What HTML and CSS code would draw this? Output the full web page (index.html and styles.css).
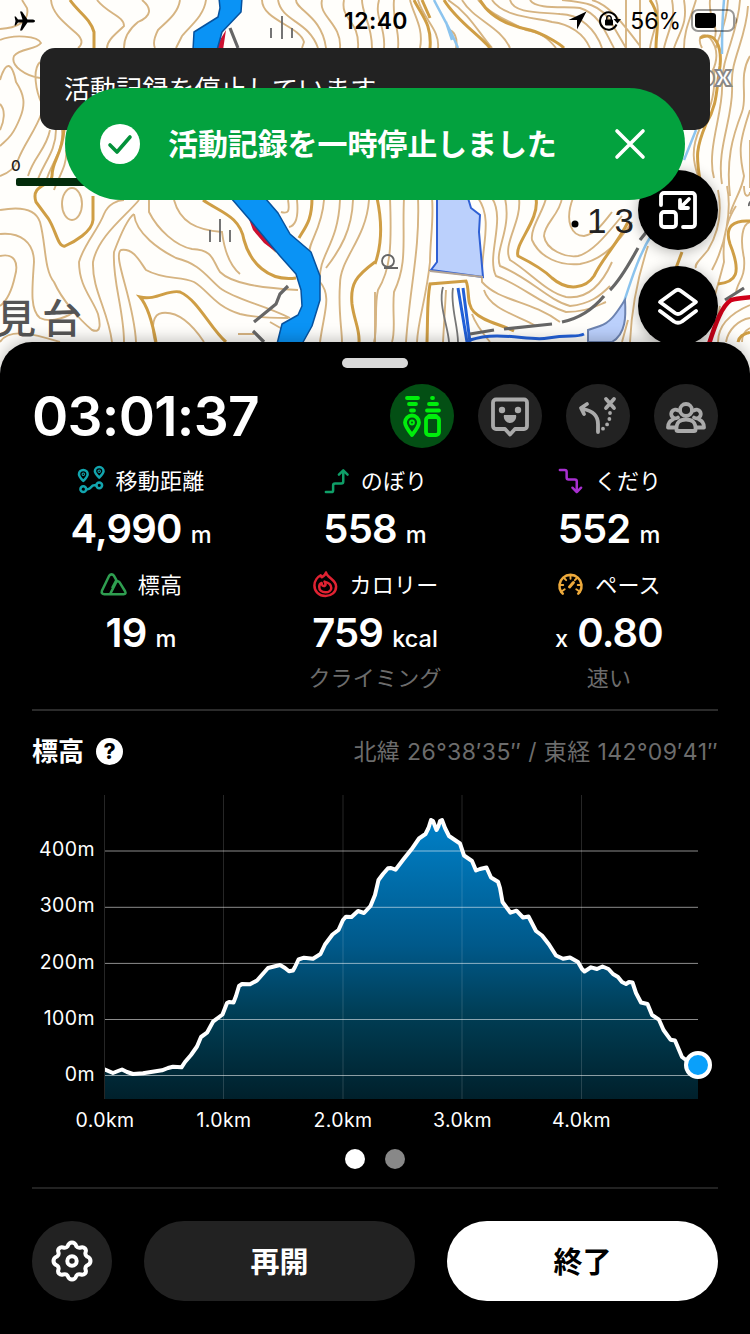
FILE: index.html
```
<!DOCTYPE html>
<html lang="ja">
<head>
<meta charset="UTF-8" />
<title>活動記録</title>
<link rel="stylesheet" href="styles.css">
</head>
<body>

<div class="map">
  <svg class="map-canvas" viewBox="0 0 750 374">
    <!-- contour lines -->
    <g class="contour">
      <path d="M0 29C16 28 30 22 27 8L22 0M51 0C52 14 66 24 76 33C84 40 82 45 78 48M97 0C108 14 124 16 124 26C116 34 107 40 107 48M142 0C152 8 152 16 138 22C128 30 124 40 124 48M180 0C178 14 166 22 158 30C154 38 153 44 155 48M206 0C204 16 190 26 182 36L176 48"/>
      <path d="M0 40C14 34 38 36 41 43C36 50 20 48 14 56C10 66 26 76 40 78M0 80C6 60 12 62 16 82C24 94 26 104 20 118C12 138 6 140 0 146M0 104C6 110 4 122 0 130M40 62C32 70 36 92 42 104M42 112C36 130 24 144 18 160C14 170 6 174 0 176M50 130C46 150 34 156 28 176M56 130C56 154 40 166 36 186M62 130C64 152 50 164 46 182M66 150C68 164 58 178 54 190"/>
      <ellipse cx="72" cy="204" rx="10" ry="16"/>
      <path d="M0 210C22 206 36 210 40 222C46 244 44 270 54 282C62 300 80 320 92 330C102 334 100 322 98 314C92 298 79 286 79 262C84 244 98 230 104 214C108 204 118 200 124 200"/>
      <path d="M0 234C20 232 34 242 34 262C32 290 30 310 40 318C52 324 70 316 76 310M0 256C14 253 19 262 15 276C12 290 8 300 0 306M139 200C126 216 98 236 93 262C92 290 108 310 112 342M134 214C128 218 120 236 114 252C112 280 124 310 124 342M0 342C10 326 40 336 60 342"/>
      <path d="M136 342C134 300 112 256 121 250C134 248 140 262 146 270C164 280 180 276 194 282C208 290 214 306 240 314C256 318 272 318 288 318M134 214C136 234 160 250 176 258C200 264 206 276 220 288C236 300 262 304 290 318M149 200V212C158 230 176 246 192 249C214 250 212 260 220 272C232 284 262 288 298 290M174 200C180 222 196 230 222 232C224 248 228 264 240 274M155 342C151 326 153 314 162 313C178 311 192 324 204 342M238 334L254 334M270 322L284 330M256 232L276 252"/>
      <path d="M288 200C290 212 288 214 281 212M297 200C299 220 294 226 289 227M324 200C322 230 306 246 310 254M340 200C338 246 318 254 320 282C332 296 324 312 320 342M353 200C352 230 340 250 326 268M369 200C366 240 340 258 340 284C338 310 342 330 342 342M375 292V342"/>
      <path d="M390 198C392 250 390 270 378 290C374 306 378 328 374 342M404 198C402 240 408 262 394 292C392 312 396 330 392 342M418 198C420 250 410 286 406 342M432 198C434 220 430 240 430 262C426 300 418 320 417 342M443 342L446 290M490 342C480 330 474 320 472 314"/>
      <path d="M573 198C564 222 572 236 584 236C596 234 604 222 612 212M562 198C560 214 544 224 544 236C546 250 566 258 578 256C594 252 610 230 622 216M546 198C544 210 530 228 532 240C540 258 560 266 580 264C604 260 620 240 632 222M519 198C522 222 502 244 510 260C530 272 546 292 566 297C590 300 604 280 612 262M505 198C512 230 494 250 500 266C530 278 548 300 570 306C590 304 600 296 610 286M492 198C506 220 486 256 496 276C520 284 540 304 566 312C590 312 600 304 606 302M478 198C494 220 480 250 482 282C500 302 530 300 560 322M484 290C490 310 520 316 536 326M648 246C640 270 632 300 630 342M664 342C662 330 650 328 652 316M628 320L622 342"/>
    </g>
    <g class="contour">
      <path d="M262 0C262 20 300 26 304 42L302 48M278 0C282 22 308 20 318 48M296 0C296 10 322 16 326 48M322 0C318 16 342 24 340 48M344 0C340 20 360 20 358 48M362 0C362 14 372 24 372 48M379 0C374 18 386 26 384 48M394 0C392 20 400 30 398 48M410 0C414 16 424 28 420 48M418 0C424 20 440 30 438 48M448 0C470 14 478 32 492 48M462 0C474 20 500 26 510 48M478 0C490 14 506 20 526 30C540 32 548 38 556 48M492 0C504 18 540 18 552 22C570 24 584 34 590 48M510 0C514 14 540 12 560 14C580 14 596 30 602 48M530 0C536 10 566 6 580 8C600 14 606 34 614 48M562 0C584 2 602 4 612 24L626 48M592 0C606 4 616 14 640 46M626 0V48M640 0V48M656 0C662 16 652 32 650 48M672 0C676 20 668 30 664 48M684 0C688 24 680 30 674 48M696 0C690 20 684 30 684 48M448 30C454 30 458 38 456 48"/>
      <path d="M702 48C696 36 704 32 710 38C718 48 718 60 712 72M740 0C738 34 722 56 722 84C724 110 706 150 714 178M748 6C746 40 730 60 732 86C734 116 716 148 722 184M750 56C738 76 748 96 742 112C732 138 726 160 730 196M750 110C740 140 738 150 744 176C742 190 734 200 730 214M750 140V188M728 0C726 30 718 36 716 48M714 70C716 92 710 112 700 128C690 150 694 164 698 176M710 0C708 20 720 26 714 40"/>
      <path d="M718 190C722 210 720 230 708 250C700 260 694 264 696 268M727 186C732 210 726 244 712 270M736 206C728 218 722 236 724 262C720 278 716 290 714 300M750 222C742 224 740 240 744 258C746 280 736 282 736 294M750 318C738 320 728 330 726 342M750 305C724 316 718 330 718 342M742 342C742 334 746 330 750 328M744 186C744 200 750 196 750 192M720 306L718 316"/>
    </g>
    <g class="contour bold">
      <path d="M70 0C78 12 90 18 94 32V48M64 130C62 156 52 160 52 176C52 186 30 184 36 202L48 218C56 230 58 248 65 246C74 242 92 232 93 220V196M203 200C220 212 240 216 244 240C250 262 268 282 296 278M156 342C152 320 146 304 140 297C156 301 168 289 180 292C198 300 210 328 226 342M312 198C312 220 306 226 299 238M375 262C356 276 350 284 352 304C354 320 360 330 359 342M377 198C384 230 380 250 375 264"/>
      <path d="M427 342C428 310 427 300 430 284L466 281C470 290 466 304 474 312C484 322 500 324 514 331M536 198C540 220 514 244 518 256C534 264 544 270 552 278C568 292 586 288 594 276C604 256 616 246 628 222"/>
      <path d="M414 0C422 16 432 24 430 48M444 0C456 20 478 34 490 48M480 0C490 18 510 26 530 30C544 34 560 44 564 48M422 0L430 18M650 0C662 18 656 28 656 48M700 38C716 30 722 48 720 66C716 90 718 104 706 124C696 148 696 156 700 180M750 221C734 220 724 226 730 244C742 274 736 282 718 284M676 268L682 252M738 342C740 334 746 334 750 332"/>
    </g>

    <!-- streams and ponds -->
    <path class="stream" d="M434 0C442 16 450 28 458 48M446 22L452 40M724 0C722 20 722 30 722 54M696 130L684 160M652 234C638 256 630 284 622 308"/>
    <path class="pond" d="M437 198H468L471 208L480 215L479 232L483 277L431 270L437 262Z"/>
    <path class="pond soft" d="M625 300C618 310 612 322 600 326L588 330V342H612C626 334 626 316 625 300Z"/>
    <path class="levee" d="M430 271L483 277"/>
    <path class="canal" d="M458 288L467 342M463 288L470 342M470 340C500 330 530 342 548 338C570 334 576 338 584 334"/>
    <path class="lane" d="M443 287C438 304 448 326 449 342M453 288C450 304 458 326 458 342"/>
    <path class="road" d="M288 286L280 294L276 304L254 322M253 331L264 342M470 334L494 330M504 329L552 324M562 322C582 318 594 308 604 296M610 290C622 278 630 262 638 248M640 240L648 230M725 300L744 288M230 28L238 48"/>

    <!-- track walked so far -->
    <path class="track" d="M214 50L226 30L223 50ZM247 214L253 230L264 243L276 252L262 226Z"/>
    <path class="track-line" d="M709 344C716 322 722 306 731 300C738 298 744 298 752 297"/>
    <path class="route" d="M219 -2H242L241 12L222 32L217 50H193L194 32L218 17L220 8Z"/>
    <path class="route" d="M231 198H265L278 213L290 234L311 252L320 276V300L312 326L302 344H277L282 324L298 315L302 306L301 290L296 274L280 256L250 220Z"/>

    <!-- vegetation marks -->
    <path class="mark" d="M271 28V38M282 16V39M292 28V38M210 230V242M220 219V242M230 230V242"/>
    <path class="mark" d="M382 261a6 6 0 1 1 12 0a6 6 0 1 1-12 0M384 268H398M749 206a5 5 0 1 1 4 4"/>

    <text class="place" x="-4" y="333">見台</text>
    <circle cx="575" cy="224" r="3.5"/>
    <text class="peak" x="587" y="233">13</text>
    <text class="logo" x="697" y="86">ox</text>

    <text class="scale-text" x="11" y="171">0</text>
    <rect class="scale-bar" x="16" y="178" width="120" height="8" rx="2"/>
  </svg>

  <header class="status">
    <svg class="plane" viewBox="0 0 22 20"><path d="M21 10C21 9 19.500 8.500 18 8.500H13.500L8 0.500H6L8.500 8.500H4L1.800 5.500H0.500L1.500 10L0.500 14.500H1.800L4 11.500H8.500L6 19.500H8L13.500 11.500H18C19.500 11.500 21 11 21 10Z"/></svg>
    <span class="clock">12:40</span>
    <div class="status-right">
      <svg width="19" height="19" viewBox="0 0 19 19"><path d="M18.500 0.500L0.500 9H9V18.500Z"/></svg>
      <svg width="22" height="20" viewBox="0 0 22 20">
        <path class="ring" d="M17.500 13.500A8.600 8.600 0 1 1 18 8"/>
        <path d="M14.500 8H22L18.500 12.500Z"/>
        <rect x="6" y="8.500" width="8" height="6" rx="1"/>
        <path class="ring thin" d="M7.800 9V7a2.200 2.200 0 0 1 4.400 0V9"/>
      </svg>
      <span class="percent">56%</span>
      <svg width="47" height="23" viewBox="0 0 47 23">
        <rect class="cell" x="1" y="1" width="42" height="21" rx="6"/>
        <rect x="4" y="4" width="21" height="15" rx="3"/>
        <path class="cap" d="M44.500 8C46.500 9 46.500 14 44.500 15Z"/>
      </svg>
    </div>
  </header>

  <div class="banner">活動記録を停止しています</div>

  <button class="map-btn shrink">
    <svg width="40" height="40" viewBox="0 0 40 40">
      <path d="M3 15V6a3 3 0 0 1 3-3H34a3 3 0 0 1 3 3V34a3 3 0 0 1-3 3H25"/>
      <rect x="3" y="22" width="15" height="15" rx="3"/>
      <path d="M31 9L22 18M22 10V18H30"/>
    </svg>
  </button>
  <button class="map-btn layers">
    <svg width="42" height="40" viewBox="0 0 42 40">
      <path d="M24 5L39 16L24 27Q21 29 18 27L3 16L18 5Q21 2.500 24 5Z"/>
      <path d="M3 25L17 35.500Q21 38 25 35.500L39 25"/>
    </svg>
  </button>

  <div class="toast">
    <svg width="40" height="40" viewBox="0 0 40 40">
      <circle cx="20" cy="20" r="20"/>
      <path d="M10 21L17 28L30 13"/>
    </svg>
    <span>活動記録を一時停止しました</span>
    <svg class="close" width="32" height="32" viewBox="0 0 32 32"><path d="M3 3L29 29M29 3L3 29"/></svg>
  </div>
</div>

<main class="panel">
  <div class="handle"></div>

  <div class="head">
    <div class="timer">03:01:37</div>
    <div class="modes">
      <button class="mode on">
        <svg viewBox="0 0 64 64">
          <path d="M17 14H28M19 20H26M21 26.500H24M42 14H43M39 20H47M37 26.500H49"/>
          <path d="M22 51C18 46 15 42 15 38.500a7 7 0 0 1 14 0C29 42 26 46 22 51Z"/>
          <circle cx="22" cy="38.500" r="1"/>
          <rect x="36" y="33" width="13" height="18" rx="3"/>
          <path d="M39 32H46"/>
        </svg>
      </button>
      <button class="mode">
        <svg viewBox="0 0 64 64">
          <path d="M18 15.500H46a3 3 0 0 1 3 3V42a3 3 0 0 1-3 3H37L32 50.500L27 45H18a3 3 0 0 1-3-3V18.500a3 3 0 0 1 3-3Z"/>
          <circle class="solid" cx="24" cy="26" r="3.200"/>
          <circle class="solid" cx="40" cy="26" r="3.200"/>
          <path class="solid" d="M26 31H38C39 35 36 39 32 39C28 39 25 35 26 31Z"/>
        </svg>
      </button>
      <button class="mode">
        <svg viewBox="0 0 64 64">
          <path d="M32 48V40C32 33 28 27 17 25M21 20L15 24L18 30M40 15L48 24M48 15L40 24"/>
          <path class="dotted" d="M44 29C44 36 42 42 35 46"/>
        </svg>
      </button>
      <button class="mode">
        <svg viewBox="0 0 64 64">
          <circle cx="32" cy="26" r="6"/>
          <path d="M22.500 46C22 38 26 35.500 32 35.500C38 35.500 42 38 41.500 46Q41.500 47 40 47H24Q22.500 47 22.500 46Z"/>
          <path d="M24 33.500A4.300 4.300 0 1 1 24 26.500M40 33.500A4.300 4.300 0 1 0 40 26.500"/>
          <path d="M19 35.500C15 37 14 40 14 43.500H21M45 35.500C49 37 50 40 50 43.500H43"/>
        </svg>
      </button>
    </div>
  </div>

  <div class="stats">
    <section class="stat">
      <h2 class="label">
        <svg class="teal" viewBox="0 0 28 28"><path d="M5.500 14.500C2 11 1 9.500 1 7.500a4.500 4.500 0 0 1 9 0C10 9.500 9 11 5.500 14.500ZM22 11C18.500 7.500 17.500 6 17.500 4.500a4.500 4.500 0 0 1 9 0C26.500 6 25.500 7.500 22 11Z"/><circle cx="5.500" cy="23" r="3"/><circle cx="22" cy="19" r="3"/><path d="M8.500 23H10C14 23 13 19 17 19H19"/><circle cx="5.500" cy="7.500" r=".5"/><circle cx="22" cy="4.500" r=".5"/></svg>
        <span>移動距離</span>
      </h2>
      <p class="value"><b>4,990</b><small>m</small></p>
    </section>
    <section class="stat">
      <h2 class="label">
        <svg class="green" viewBox="0 0 28 28"><path d="M3 26H8.500a2 2 0 0 0 2-2V19a2 2 0 0 1 2-2H19a2 2 0 0 0 2-2V4M16.500 8L21 3.500L25.500 8"/></svg>
        <span>のぼり</span>
      </h2>
      <p class="value"><b>558</b><small>m</small></p>
    </section>
    <section class="stat">
      <h2 class="label">
        <svg class="purple" viewBox="0 0 28 28"><path d="M3 3H8a2 2 0 0 1 2 2V11a2 2 0 0 0 2 2H18.500a2 2 0 0 1 2 2V26M16 21.500L20.500 26L25 21.500"/></svg>
        <span>くだり</span>
      </h2>
      <p class="value"><b>552</b><small>m</small></p>
    </section>
    <section class="stat">
      <h2 class="label">
        <svg class="leaf" viewBox="0 0 28 28"><path d="M9.500 5C11 3 13 3 14.500 5L17 9.500L13 17M4.500 24H24.500Q27.500 24 26 21L20.500 12Q18.500 9.500 16.500 12L10.500 24M9.500 5L2 20.500Q1 24 4.500 24"/></svg>
        <span>標高</span>
      </h2>
      <p class="value"><b>19</b><small>m</small></p>
    </section>
    <section class="stat">
      <h2 class="label">
        <svg class="red" viewBox="0 0 28 28"><path d="M14 26C7 26 2.500 21 2.500 15C2.500 10 6 6 9 4.500L10 6.500C12 5.500 14 3.500 14.500 1.500C15.500 7 25 9 25 16C25 22 20 26 14 26Z"/><path d="M14 22C10 22 7.500 20 7.500 16.500C7.500 14.500 8.500 13 10 12.500C10 15 11.500 16 13 15.500C14.500 14.500 14 12.500 13 11C17 12 20 14 20 17.500C20 20 17.500 22 14 22Z"/></svg>
        <span>カロリー</span>
      </h2>
      <p class="value"><b>759</b><small>kcal</small></p>
      <p class="note">クライミング</p>
    </section>
    <section class="stat">
      <h2 class="label">
        <svg class="orange" viewBox="0 0 28 28"><path d="M6 23.500L4.500 22A11.500 11.500 0 1 1 23.500 22L22 23.500"/><path class="tick" d="M14 4V8M20.500 7.500L18.500 9.500M7.500 7.500L9.500 9.500M3 14.500H6.500M21.500 14.500H25M5 21L8 19M23 21L20 19"/><path class="needle" d="M13 16.500L17 12"/></svg>
        <span>ペース</span>
      </h2>
      <p class="value"><small>x</small><b>0.80</b></p>
      <p class="note">速い</p>
    </section>
  </div>

  <div class="chart-head">
    <h3>標高</h3>
    <span class="help">?</span>
    <span class="coords">北緯 26°38′35″ / 東経 142°09′41″</span>
  </div>

  <svg class="chart" viewBox="32 780 686 360">
    <defs>
      <linearGradient id="fade" gradientUnits="userSpaceOnUse" x1="0" y1="820" x2="0" y2="1099">
        <stop offset="0" stop-color="#0080c8"/>
        <stop offset=".45" stop-color="#00598a"/>
        <stop offset=".7" stop-color="#003d54"/>
        <stop offset="1" stop-color="#00202b"/>
      </linearGradient>
      <clipPath id="plot"><rect x="105" y="795" width="593" height="304"/></clipPath>
      <path id="profile" d="M90 1110V1069.500H105L113 1073L118 1071L122 1069.500L127 1072L133 1074L143 1073.300L162 1070.300L168 1068L173 1066.700L181.500 1067.300L185 1062L191 1055L197 1046.500L201 1037L207 1032.700L213 1021.700L222.500 1014.500L227 1003L229 1002L233.500 1002.500L236 996L239 986L242 984L250 984.300L257 980.500L268 968L280 965L285 968L289 971.300L293 970.500L295 967L298.500 959.500L304 957.700L313 958.700L320.500 954L325 944.500L332.500 934.500L338.500 930L343 920L346 916.700L351.500 917L358 911L364 913L370.500 906L375 895L378.500 880L383 874L388 868.300L391 868L395.500 869.700L403.500 859.300L411.500 849.300L419 838.500L425.500 834L428.500 828L431 820L433 821L436.500 830L438.500 826L440 821L442 820L445 828L449 836L460 843.500L464 855.500L472 861L476 870.500L480 869L486.500 867.500L491 877.500L498 881.700L500 888L502.500 902L510.500 912.700L516.500 910.700L523 917.500L528.500 916.500L536 931L542 935.500L549 944.500L556 955.500L563 958.700L570 957.500L578 962L582 969L584.500 971.500L591 967.300L597 969L602.500 966.500L608.500 969L613 974L618 977L622 982L626 984L629 982L632.500 982.500L636 993L641 1002.500L647.500 1004L652 1015L659 1019.700L663.500 1030L670.500 1039.700L675 1040.500L682 1057L690 1063L698 1065H710V1110Z"/>
    </defs>
    <use href="#profile" fill="url(#fade)" clip-path="url(#plot)"/>
    <path class="grid-v" d="M104.500 795V1099M223.500 795V1099M343 795V1099M462 795V1099M581.500 795V1099"/>
    <path class="grid-h" d="M105 851H698M105 907.300H698M105 963.400H698M105 1019.500H698M105 1075.500H698"/>
    <use class="line" href="#profile" clip-path="url(#plot)"/>
    <circle class="now" cx="698" cy="1065" r="12"/>
    <g class="axis axis-y">
      <text x="95" y="856">400m</text>
      <text x="95" y="912">300m</text>
      <text x="95" y="969">200m</text>
      <text x="95" y="1025">100m</text>
      <text x="95" y="1081">0m</text>
    </g>
    <g class="axis">
      <text x="105" y="1127">0.0km</text>
      <text x="224" y="1127">1.0km</text>
      <text x="343" y="1127">2.0km</text>
      <text x="462.500" y="1127">3.0km</text>
      <text x="581.500" y="1127">4.0km</text>
    </g>
  </svg>

  <div class="pager"><i class="active"></i><i></i></div>

  <footer class="actions">
    <button class="gear">
      <svg width="44" height="44" viewBox="0 0 44 44">
        <path d="M22 3.500C25 3.500 25.500 5 26.500 7.500C27.500 9 29 9 31 8.500C33 8 34 8.500 35 9.500C36 10.500 36.300 11.500 35.500 13.500C35 15.500 35.500 16.500 37 17.500C39.500 18.500 40.500 19.500 40.500 22C40.500 24.500 39.500 25.500 37 26.500C35.500 27.500 35 28.500 35.500 30.500C36.300 32.500 36 33.500 35 34.500C34 35.500 33 36 31 35.500C29 35 27.500 35 26.500 36.500C25.500 39 25 40.500 22 40.500C19 40.500 18.500 39 17.500 36.500C16.500 35 15 35 13 35.500C11 36 10 35.500 9 34.500C8 33.500 7.700 32.500 8.500 30.500C9 28.500 8.500 27.500 7 26.500C4.500 25.500 3.500 24.500 3.500 22C3.500 19.500 4.500 18.500 7 17.500C8.500 16.500 9 15.500 8.500 13.500C7.700 11.500 8 10.500 9 9.500C10 8.500 11 8 13 8.500C15 9 16.500 9 17.500 7.500C18.500 5 19 3.500 22 3.500Z"/>
        <circle cx="22" cy="22" r="4.700"/>
      </svg>
    </button>
    <button class="pill">再開</button>
    <button class="pill light">終了</button>
  </footer>
</main>

</body>
</html>
```

FILE: styles.css
```
* {
  box-sizing: border-box;
}
body {
  margin: 0;
  width: 750px;
  height: 1334px;
  overflow: hidden;
  background: #000;
  color: #fff;
  font-family: Inter, 'Noto Sans CJK JP', sans-serif;
}
h2, h3, p {
  margin: 0;
}
button {
  border: none;
  padding: 0;
  color: inherit;
  font-family: inherit;
  display: flex;
  align-items: center;
  justify-content: center;
}
svg {
  display: block;
  flex: none;
}

/* Map */
.map {
  position: relative;
  height: 374px;
  background: #fffefb;
  overflow: hidden;
}
.map-canvas {
  position: absolute;
  top: 0;
  left: 0;
  width: 750px;
  height: 374px;
}
.contour {
  fill: none;
  stroke: #d6b482;
  stroke-width: 1.9;
}
.contour.bold {
  stroke: #cf9e45;
  stroke-width: 3;
}
.stream {
  fill: none;
  stroke: #8cc4ee;
  stroke-width: 2.5;
}
.pond {
  fill: #bbd0fc;
  stroke: #2f60d4;
  stroke-width: 2;
}
.pond.soft {
  stroke: #6d83b0;
}
.levee {
  fill: none;
  stroke: #b3a394;
  stroke-width: 2;
}
.canal {
  fill: none;
  stroke: #2260d8;
  stroke-width: 3;
}
.lane {
  fill: none;
  stroke: #777;
  stroke-width: 1.8;
}
.road {
  fill: none;
  stroke: #666;
  stroke-width: 3.2;
}
.track {
  fill: #cc1030;
}
.track-line {
  fill: none;
  stroke: #d00018;
  stroke-width: 4.5;
}
.route {
  fill: #0a93f5;
  stroke: #07529e;
  stroke-width: 1.5;
  stroke-linejoin: round;
}
.mark {
  fill: none;
  stroke: #666;
  stroke-width: 1.8;
}
.place {
  font: 500 40px 'Noto Sans CJK JP', sans-serif;
  letter-spacing: 6px;
  fill: #555;
}
.peak {
  font: 35px 'Liberation Sans', sans-serif;
  letter-spacing: 8px;
  fill: #222;
}
.logo {
  font: 800 29px Inter, sans-serif;
  fill: #fff;
  stroke: #888;
  stroke-width: 1.8;
}
.scale-text {
  font: 500 15px Inter, sans-serif;
  fill: #222;
}
.scale-bar {
  fill: #032b0b;
}

/* Status bar */
.status {
  position: relative;
  display: grid;
  grid-template-columns: 1fr auto 1fr;
  align-items: center;
  height: 41px;
  margin-bottom: 7px;
  padding: 0 12px 0 14px;
  color: #000;
}
.plane {
  width: 22px;
  height: 20px;
}
.clock {
  font-size: 23px;
  font-weight: 600;
  letter-spacing: .4px;
}
.status-right {
  display: flex;
  align-items: center;
  justify-content: flex-end;
}
.status-right svg:nth-child(2) {
  margin: 0 9px 0 12px;
}
.percent {
  font-size: 23px;
  margin-right: 10px;
}
.ring {
  fill: none;
  stroke: #000;
  stroke-width: 2;
}
.ring.thin {
  stroke-width: 1.5;
}
.cell {
  fill: none;
  stroke: #000;
  stroke-opacity: .4;
  stroke-width: 2;
}
.cap {
  fill-opacity: .4;
}

.banner {
  position: relative;
  height: 82px;
  margin: 0 40px;
  padding: 0 24px;
  border-radius: 15px;
  background: #222;
  font-size: 26px;
  letter-spacing: .1px;
  line-height: 84px;
}
.toast {
  position: absolute;
  top: 88px;
  left: 65px;
  width: 620px;
  height: 112px;
  padding: 0 39px 0 35px;
  border-radius: 56px;
  background: #03a23e;
  display: flex;
  align-items: center;
  font-size: 30px;
  font-weight: 700;
}
.toast span {
  margin: 0 auto 0 28px;
  padding-bottom: 4px;
  letter-spacing: -.1px;
}
.toast circle {
  fill: #fff;
}
.toast path {
  fill: none;
  stroke: #03913a;
  stroke-width: 3.6;
  stroke-linecap: round;
  stroke-linejoin: round;
}
.toast .close path {
  stroke: #fff;
}
.map-btn {
  position: absolute;
  left: 638px;
  width: 80px;
  height: 80px;
  border-radius: 50%;
  background: #000;
  box-shadow: 0 2px 14px rgba(0, 0, 0, .3);
}
.map-btn svg {
  fill: none;
  stroke: #fff;
  stroke-width: 3.8;
  stroke-linecap: round;
  stroke-linejoin: round;
}
.shrink {
  top: 170px;
}
.layers {
  top: 266px;
}

/* Bottom panel */
.panel {
  position: relative;
  height: 992px;
  margin-top: -32px;
  padding: 16px 32px 0;
  border-radius: 32px 32px 0 0;
  background: #000;
  box-shadow: 0 -2px 16px rgba(0, 0, 0, .25);
}
.handle {
  width: 66px;
  height: 10px;
  margin: 0 auto 16px;
  border-radius: 5px;
  background: #d9d9d9;
}
.head {
  display: flex;
  align-items: center;
  justify-content: space-between;
  height: 64px;
  margin-bottom: 16px;
}
.timer {
  font-size: 55px;
  font-weight: 600;
  letter-spacing: -.7px;
}
.modes {
  display: flex;
  gap: 24px;
}
.mode {
  width: 64px;
  height: 64px;
  border-radius: 50%;
  background: #222;
}
.mode svg {
  width: 64px;
  height: 64px;
  fill: none;
  stroke: #aaa;
  stroke-width: 3.8;
  stroke-linecap: round;
  stroke-linejoin: round;
}
.mode .solid {
  fill: #aaa;
  stroke: none;
}
.mode .dotted {
  stroke-dasharray: 0 6;
}
.mode.on {
  background: #034f14;
}
.mode.on svg {
  stroke: #00ee0c;
}

.stats {
  display: grid;
  grid-template-columns: repeat(3, 234px);
  grid-template-rows: 104px 141px;
  margin: 0 -8px;
}
.stat {
  text-align: center;
}
.label {
  display: flex;
  align-items: center;
  justify-content: center;
  gap: 11px;
  height: 32px;
  font-size: 22px;
  font-weight: 400;
}
.label span {
  padding-bottom: 3px;
  letter-spacing: .2px;
}
.label svg {
  width: 27px;
  height: 27px;
  fill: none;
  stroke: currentColor;
  stroke-width: 2.6;
  stroke-linecap: round;
  stroke-linejoin: round;
  overflow: visible;
}
.label .tick {
  stroke-width: 2;
}
.label .needle {
  stroke-width: 3.2;
}
.teal { color: #12a5ae; }
.green { color: #0f9f68; }
.purple { color: #a82fd0; }
.leaf { color: #2f9e50; }
.red { color: #e02232; }
.orange { color: #eeaa3c; }
.value {
  display: flex;
  align-items: baseline;
  justify-content: center;
  gap: 9px;
  height: 64px;
  line-height: 65px;
}
.value b {
  font-size: 40px;
  font-weight: 600;
  letter-spacing: -.8px;
}
.value small {
  font-size: 23.5px;
  font-weight: 500;
}
.note {
  color: #6c6c6c;
  font-size: 22px;
  letter-spacing: .2px;
  line-height: 28px;
}

/* Elevation chart */
.chart-head {
  display: flex;
  align-items: center;
  height: 71px;
  padding-top: 12px;
  border-top: 2px solid #2b2b2b;
}
.chart-head h3 {
  padding-bottom: 4px;
  font-size: 26px;
  font-weight: 700;
}
.help {
  width: 27px;
  height: 27px;
  margin-left: 12px;
  border-radius: 50%;
  background: #fff;
  color: #000;
  font-size: 21px;
  font-weight: 800;
  line-height: 27px;
  text-align: center;
}
.coords {
  margin-left: auto;
  padding-bottom: 3px;
  color: #6c6c6c;
  font-size: 23px;
  letter-spacing: .4px;
}
.chart {
  width: 686px;
  height: 360px;
}
.grid-h, .grid-v {
  stroke: #fff;
  stroke-opacity: .55;
  stroke-width: 1;
}
.grid-v {
  stroke-opacity: .15;
}
.line {
  fill: none;
  stroke: #fff;
  stroke-width: 4;
  stroke-linejoin: round;
}
.now {
  fill: #0aa0fa;
  stroke: #fff;
  stroke-width: 4;
}
.axis {
  font-size: 19.5px;
  fill: #fff;
  text-anchor: middle;
  letter-spacing: .4px;
}
.axis-y {
  text-anchor: end;
}
.pager {
  display: flex;
  justify-content: center;
  gap: 20px;
  height: 47px;
  padding-top: 9px;
}
.pager i {
  width: 20px;
  height: 20px;
  border-radius: 50%;
  background: #888;
}
.pager .active {
  background: #fff;
}

/* Buttons */
.actions {
  display: grid;
  grid-template-columns: 80px 1fr 1fr;
  gap: 32px;
  height: 114px;
  padding-top: 32px;
  border-top: 2px solid #222;
}
.gear, .pill {
  height: 80px;
  border-radius: 40px;
  background: #222;
}
.gear svg {
  fill: none;
  stroke: #fff;
  stroke-width: 4;
  stroke-linejoin: round;
}
.pill {
  padding-bottom: 3px;
  font-size: 29px;
  font-weight: 700;
}
.pill.light {
  background: #fff;
  color: #000;
}
```
